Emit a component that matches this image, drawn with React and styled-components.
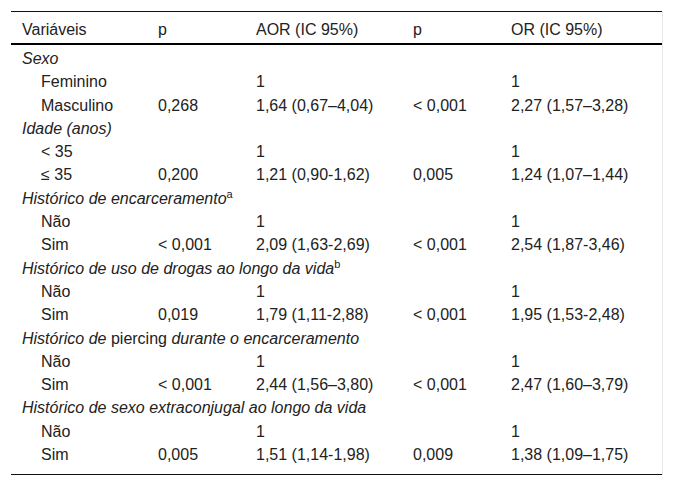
import { createGlobalStyle } from "styled-components";
import styled from "styled-components";

const GlobalStyle = createGlobalStyle`
  html, body {
    margin: 0;
    padding: 0;
    background: #ffffff;
  }
  body {
    font-family: "Liberation Sans", Arial, sans-serif;
    color: #222222;
  }
`;

const Page = styled.div`
  width: 673px;
  height: 486px;
  box-sizing: border-box;
  padding: 11px 10px 0 11px;
`;

const Frame = styled.div`
  width: 652px;
  border-right: 1px solid #e6e6e6;
  box-sizing: border-box;
`;

const Table = styled.table`
  width: 651px;
  border-collapse: collapse;
  font-size: 16px;
  line-height: 18px;
  border-top: 1px solid #111;
  border-bottom: 1px solid #111;
  table-layout: fixed;
`;

const HeadCell = styled.th`
  text-align: left;
  font-weight: 400;
  padding: 9px 0 4px 11px;
  border-bottom: 2px solid #000;
  white-space: nowrap;
`;

const Cell = styled.td`
  padding: 5px 0 0.3px ${(p) => (p.$indent ? "30px" : "11px")};
  white-space: nowrap;
  font-style: ${(p) => (p.$group ? "italic" : "normal")};
  vertical-align: top;
`;

const LastRow = styled.tr`
  td {
    padding-bottom: 10px;
  }
`;

const Plain = styled.span`
  font-style: normal;
`;

const Sup = styled.sup`
  font-style: normal;
  font-size: 11px;
  line-height: 0;
  vertical-align: 6px;
`;

const columns = ["Variáveis", "p", "AOR (IC 95%)", "p", "OR (IC 95%)"];

const groups = [
  {
    title: "Sexo",
    rows: [
      ["Feminino", "", "1", "", "1"],
      ["Masculino", "0,268", "1,64 (0,67–4,04)", "< 0,001", "2,27 (1,57–3,28)"],
    ],
  },
  {
    title: "Idade (anos)",
    rows: [
      ["< 35", "", "1", "", "1"],
      ["≤ 35", "0,200", "1,21 (0,90-1,62)", "0,005", "1,24 (1,07–1,44)"],
    ],
  },
  {
    title: (
      <>
        Histórico de encarceramento<Sup>a</Sup>
      </>
    ),
    rows: [
      ["Não", "", "1", "", "1"],
      ["Sim", "< 0,001", "2,09 (1,63-2,69)", "< 0,001", "2,54 (1,87-3,46)"],
    ],
  },
  {
    title: (
      <>
        Histórico de uso de drogas ao longo da vida<Sup>b</Sup>
      </>
    ),
    rows: [
      ["Não", "", "1", "", "1"],
      ["Sim", "0,019", "1,79 (1,11-2,88)", "< 0,001", "1,95 (1,53-2,48)"],
    ],
  },
  {
    title: (
      <>
        Histórico de <Plain>piercing</Plain> durante o encarceramento
      </>
    ),
    rows: [
      ["Não", "", "1", "", "1"],
      ["Sim", "< 0,001", "2,44 (1,56–3,80)", "< 0,001", "2,47 (1,60–3,79)"],
    ],
  },
  {
    title: "Histórico de sexo extraconjugal ao longo da vida",
    rows: [
      ["Não", "", "1", "", "1"],
      ["Sim", "0,005", "1,51 (1,14-1,98)", "0,009", "1,38 (1,09–1,75)"],
    ],
  },
];

const widths = [136, 98, 157, 98, 162];

const GroupRows = ({ group, last }) => (
  <>
    <tr>
      <Cell $group colSpan={5}>
        {group.title}
      </Cell>
    </tr>
    {group.rows.map((r, ri) => {
      const Row = last && ri === group.rows.length - 1 ? LastRow : "tr";
      return (
        <Row key={ri}>
          {r.map((v, ci) => (
            <Cell key={ci} $indent={ci === 0}>
              {v}
            </Cell>
          ))}
        </Row>
      );
    })}
  </>
);

const App = () => {
  return (
    <Page>
      <GlobalStyle />
      <Frame>
        <Table>
          <colgroup>
            {widths.map((w, i) => (
              <col key={i} style={{ width: w }} />
            ))}
          </colgroup>
          <thead>
            <tr>
              {columns.map((c, i) => (
                <HeadCell key={i}>{c}</HeadCell>
              ))}
            </tr>
          </thead>
          <tbody>
            {groups.map((g, gi) => (
              <GroupRows key={gi} group={g} last={gi === groups.length - 1} />
            ))}
          </tbody>
        </Table>
      </Frame>
    </Page>
  );
};

export default App;
